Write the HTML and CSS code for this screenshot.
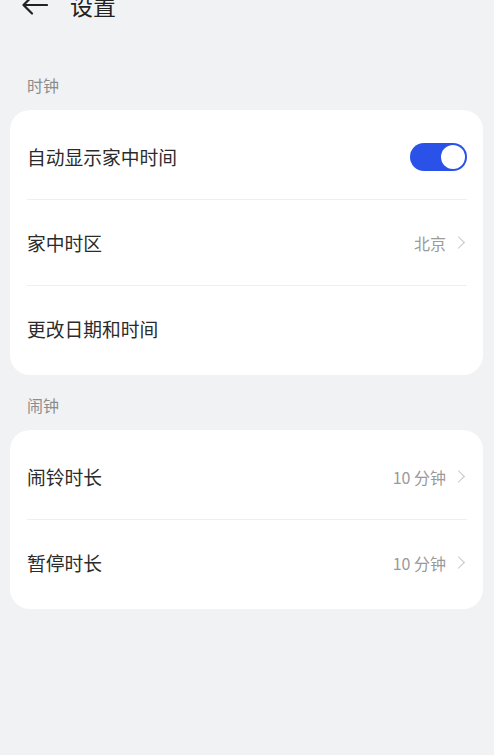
FILE: index.html
```html
<!DOCTYPE html>
<html lang="zh-CN">
<head>
    <meta charset="UTF-8">
    <meta name="viewport" content="width=device-width, initial-scale=1.0">
    <title>设置</title>
    <link rel="stylesheet" href="styles.css">
</head>
<body>
    <div class="header">
        <svg class="back" width="26" height="20" viewBox="0 0 26 20">
            <path d="M25 10H2M10 1.5L1.5 10L10 18.5" fill="none" stroke="#222" stroke-width="2.2" stroke-linecap="round" stroke-linejoin="round"/>
        </svg>
        <span class="title">设置</span>
    </div>

    <div class="group-label first">时钟</div>
    <div class="card">
        <div class="row">
            <span class="row-title">自动显示家中时间</span>
            <div class="switch on"><span class="knob"></span></div>
        </div>
        <div class="row">
            <span class="row-title">家中时区</span>
            <span class="row-value">北京<span class="chevron"></span></span>
        </div>
        <div class="row">
            <span class="row-title">更改日期和时间</span>
        </div>
    </div>

    <div class="group-label">闹钟</div>
    <div class="card">
        <div class="row">
            <span class="row-title">闹铃时长</span>
            <span class="row-value">10 分钟<span class="chevron"></span></span>
        </div>
        <div class="row">
            <span class="row-title">暂停时长</span>
            <span class="row-value">10 分钟<span class="chevron"></span></span>
        </div>
    </div>
</body>
</html>
```

FILE: styles.css
```css
body {
    margin: 0;
    background: #f1f2f4;
    font-family: "Noto Sans CJK SC", "Noto Sans", sans-serif;
    color: #222;
}
.header {
    display: flex;
    align-items: center;
    height: 38px;
    margin-top: -14px;
    padding-left: 22px;
}
.back {
    margin-right: 22px;
}
.title {
    font-size: 23px;
    color: #222;
}
.group-label {
    font-size: 16px;
    line-height: 22px;
    color: #8c8c8c;
    padding: 0 27px;
    margin: 19px 0 14px;
}
.group-label.first {
    margin-top: 50px;
}
.card {
    background: #fff;
    border-radius: 20px;
    margin: 0 11px 0 10px;
    padding: 4px 16px 4px 17px;
}
.row {
    display: flex;
    align-items: center;
    justify-content: space-between;
    height: 85px;
    border-bottom: 1px solid #efefef;
}
.row:last-child {
    border-bottom: none;
}
.row-title {
    font-size: 18.75px;
    color: #2b2b2b;
}
.row-value {
    display: flex;
    align-items: center;
    font-size: 16px;
    color: #9a9a9a;
}
.chevron {
    width: 8px;
    height: 8px;
    border-top: 1.5px solid #c4c4c4;
    border-right: 1.5px solid #c4c4c4;
    transform: rotate(45deg);
    margin: 0 4px 0 8px;
}
.switch {
    width: 57px;
    height: 28px;
    border-radius: 14px;
    background: #2b52e8;
    display: flex;
    align-items: center;
    justify-content: flex-end;
    padding: 0 2px;
    box-sizing: border-box;
}
.knob {
    width: 24px;
    height: 24px;
    border-radius: 50%;
    background: #fff;
}
```
